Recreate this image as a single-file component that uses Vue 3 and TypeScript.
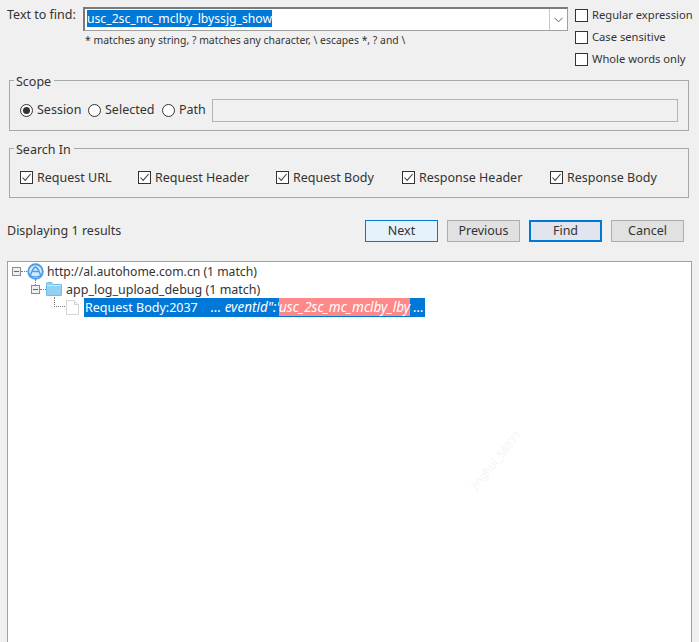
<script setup lang="ts">
const searchIn = [
  { label: 'Request URL', width: 118 },
  { label: 'Request Header', width: 138 },
  { label: 'Request Body', width: 126 },
  { label: 'Response Header', width: 148 },
  { label: 'Response Body', width: 120 },
]

const scopes = [
  { label: 'Session', width: 68, on: true },
  { label: 'Selected', width: 74, on: false },
  { label: 'Path', width: 50, on: false },
]

const options = ['Regular expression', 'Case sensitive', 'Whole words only']
const buttons = ['Next', 'Previous', 'Find', 'Cancel']
</script>

<template>
  <div class="dialog">
    <div class="find-row">
      <span class="find-label">Text to find:</span>
      <div class="find-middle">
        <div class="combo">
          <span class="combo-text"><span class="selected">usc_2sc_mc_mclby_lbyssjg_show</span></span>
          <span class="combo-arrow">
            <svg width="9" height="6" viewBox="0 0 9 6"><path d="M.5.8 4.5 4.8 8.5.8" fill="none" stroke="#606060" /></svg>
          </span>
        </div>
        <div class="hint">* matches any string, ? matches any character, \ escapes *, ? and \</div>
      </div>
      <div class="options">
        <label v-for="opt in options" :key="opt" class="check option">
          <span class="box"></span>{{ opt }}
        </label>
      </div>
    </div>

    <section class="group scope">
      <span class="legend">Scope</span>
      <label
        v-for="s in scopes"
        :key="s.label"
        class="radio"
        :class="{ 'radio-on': s.on }"
        :style="{ width: s.width + 'px' }"
      ><span class="dot"></span>{{ s.label }}</label>
      <div class="path-input"></div>
    </section>

    <section class="group search-in">
      <span class="legend">Search In</span>
      <label v-for="item in searchIn" :key="item.label" class="check" :style="{ width: item.width + 'px' }">
        <span class="box">
          <svg width="11" height="11" viewBox="0 0 11 11"><path d="M1.5 5.5 4.2 8.4 9.6 2" fill="none" stroke="#444" stroke-width="1.1" /></svg>
        </span>{{ item.label }}
      </label>
    </section>

    <div class="action-row">
      <span class="status">Displaying 1 results</span>
      <div class="buttons">
        <button
          v-for="b in buttons"
          :key="b"
          class="btn"
          :class="{ hover: b === 'Next', focus: b === 'Find' }"
        >{{ b }}</button>
      </div>
    </div>

    <div class="tree">
      <div class="node level-0">
        <span class="expander"></span>
        <span class="stub"></span>
        <svg class="globe" width="17" height="17" viewBox="0 0 17 17">
          <circle cx="8.5" cy="8.5" r="8.2" fill="#4a9de8" />
          <circle cx="8.5" cy="8.5" r="6.3" fill="#d6eafb" />
          <path d="M3.500 12c1.500-4.500 3.200-7.500 5-8 1.800.5 3.500 3.500 5 8M5.500 8.500h6M3 12.500c3.500 1.800 7.500 1.800 11 0" fill="none" stroke="#4a9de8" stroke-width="1.400" />
        </svg>
        <span class="node-text url-text">http://al.autohome.com.cn (1 match)</span>
      </div>
      <div class="node level-1">
        <span class="expander"></span>
        <span class="stub"></span>
        <svg class="folder" width="16" height="14" viewBox="0 0 16 14">
          <path d="M.5 13V1.500q0-1 1-1h4l1.500 2h8.500V13q0 .5-.5.500H1q-.5 0-.5-.5Z" fill="#8fd2f5" stroke="#6fbce8" />
          <path d="M1 3.500h14" stroke="#c4e9fb" />
        </svg>
        <span class="node-text">app_log_upload_debug (1 match)</span>
      </div>
      <div class="node level-2">
        <span class="elbow"></span>
        <svg class="page" width="13" height="15" viewBox="0 0 13 15">
          <path d="M.5.500h8l4 4v10H.5Z" fill="#fff" stroke="#d4d4d4" />
          <path d="M8.500.500v4h4" fill="#f0f0f0" stroke="#d4d4d4" />
        </svg>
        <span class="result">Request Body:2037 &nbsp;&nbsp; <i>... eventid":'<b>usc_2sc_mc_mclby_lby</b> ...</i></span>
      </div>
      <span class="watermark">jinghui_58871</span>
    </div>
  </div>
</template>

<style scoped>
.dialog {
  height: 642px;
  overflow: hidden;
  background: #f0f0f0;
  color: #333;
  font: 12.5px/16px "Noto Sans", "Liberation Sans", sans-serif;
  padding: 7px 7px 0;
  box-sizing: border-box;
}

.find-row {
  display: flex;
  height: 73px;
}

.find-label {
  flex: none;
  width: 76px;
}

.find-middle {
  flex: none;
  width: 485px;
}

.combo {
  height: 24px;
  box-sizing: border-box;
  border: 1px solid #a0a0a0;
  border-top: 2px solid #7a7a7a;
  border-left: 2px solid #7a7a7a;
  background: #fff;
  display: flex;
  justify-content: space-between;
}

.combo-text {
  padding: 1px 0 0 2px;
  font-size: 12.2px;
  line-height: 17px;
}

.selected {
  display: inline-block;
  height: 17px;
  background: #0078d7;
  color: #fff;
}

.combo-arrow {
  width: 17px;
  border-left: 1px solid #c8c8c8;
  display: flex;
  align-items: center;
  justify-content: center;
}

.hint {
  font-size: 10.4px;
  line-height: 14px;
  margin: 2px 0 0 2px;
}

.options {
  flex: none;
  margin: -3px 0 0 7px;
}

.check {
  display: inline-flex;
  align-items: center;
  white-space: nowrap;
}

.option {
  display: flex;
  height: 22px;
  font-size: 11.2px;
}

.box {
  width: 13px;
  height: 13px;
  box-sizing: border-box;
  border: 1px solid #333;
  background: #fff;
  margin-right: 4px;
  display: inline-flex;
  flex: none;
}

.group {
  position: relative;
  box-sizing: border-box;
  margin: 0 3px 0 2px;
  padding: 9px 10px 0;
  border: 1px solid #a8a8a8;
  display: flex;
  align-items: center;
}

.legend {
  position: absolute;
  top: -7px;
  left: 4px;
  padding: 0 3px 0 2px;
  background: #f0f0f0;
}

.scope {
  height: 51px;
}

.radio {
  display: inline-flex;
  align-items: center;
  flex: none;
}

.dot {
  width: 13px;
  height: 13px;
  box-sizing: border-box;
  border: 1px solid #333;
  border-radius: 50%;
  background: #fff;
  margin-right: 4px;
  display: inline-flex;
  align-items: center;
  justify-content: center;
}

.radio-on .dot::after {
  content: "";
  width: 7px;
  height: 7px;
  border-radius: 50%;
  background: #333;
}

.path-input {
  flex: 1;
  height: 21px;
  border: 1px solid #b4b4b4;
}

.search-in {
  height: 50px;
  margin-top: 17px;
}

.action-row {
  display: flex;
  justify-content: space-between;
  align-items: center;
  height: 22px;
  margin-top: 22px;
  padding-right: 8px;
}

.buttons {
  display: flex;
  gap: 9px;
}

.btn {
  width: 73px;
  height: 22px;
  padding: 0;
  box-sizing: border-box;
  border: 1px solid #adadad;
  background: #e1e1e1;
  color: #333;
  font: inherit;
}

.btn.hover {
  background: #e5f1fb;
  border-color: #0078d7;
}

.btn.focus {
  border: 2px solid #0078d7;
  background: #e1e6ee;
}

.tree {
  position: relative;
  margin-top: 19px;
  height: 400px;
  box-sizing: border-box;
  border: 1px solid #a0a0a0;
  background: #fff;
}

.node {
  display: flex;
  align-items: center;
  height: 18px;
  position: relative;
}

.node-text {
  margin-top: 2px;
}

.url-text {
  font-size: 12.2px;
}

.expander {
  width: 9px;
  height: 9px;
  box-sizing: border-box;
  border: 1px solid #8c8c8c;
  background: linear-gradient(#666, #666) center / 5px 1px no-repeat #eee;
  flex: none;
}

.stub {
  width: 6px;
  border-top: 1px dotted #777;
  flex: none;
}

.globe {
  margin-right: 3px;
  flex: none;
}

.folder {
  margin-right: 4px;
  flex: none;
}

.level-0 {
  padding-left: 4px;
}

.level-1 {
  padding-left: 23px;
}

.level-1::before {
  content: "";
  position: absolute;
  left: 27px;
  top: -1px;
  height: 6px;
  border-left: 1px dotted #777;
}

.level-2 {
  padding-left: 46px;
}

.elbow {
  width: 12px;
  height: 9px;
  align-self: flex-start;
  margin-top: -1px;
  box-sizing: content-box;
  border-left: 1px dotted #777;
  border-bottom: 1px dotted #777;
  margin-right: -1px;
  flex: none;
}

.page {
  margin-right: 5px;
  flex: none;
}

.result {
  background: #0078d7;
  color: #fff;
  padding: 0 1px;
  line-height: 18px;
  white-space: pre;
}

.result i {
  font-size: 13.5px;
}

.result b {
  background: #f88;
  font-weight: 400;
}

.watermark {
  position: absolute;
  left: 452px;
  top: 190px;
  font-size: 11px;
  color: #f4f4f4;
  transform: rotate(-50deg);
  white-space: nowrap;
}
</style>

<style>
html,
body {
  margin: 0;
  background: #f0f0f0;
}
</style>
